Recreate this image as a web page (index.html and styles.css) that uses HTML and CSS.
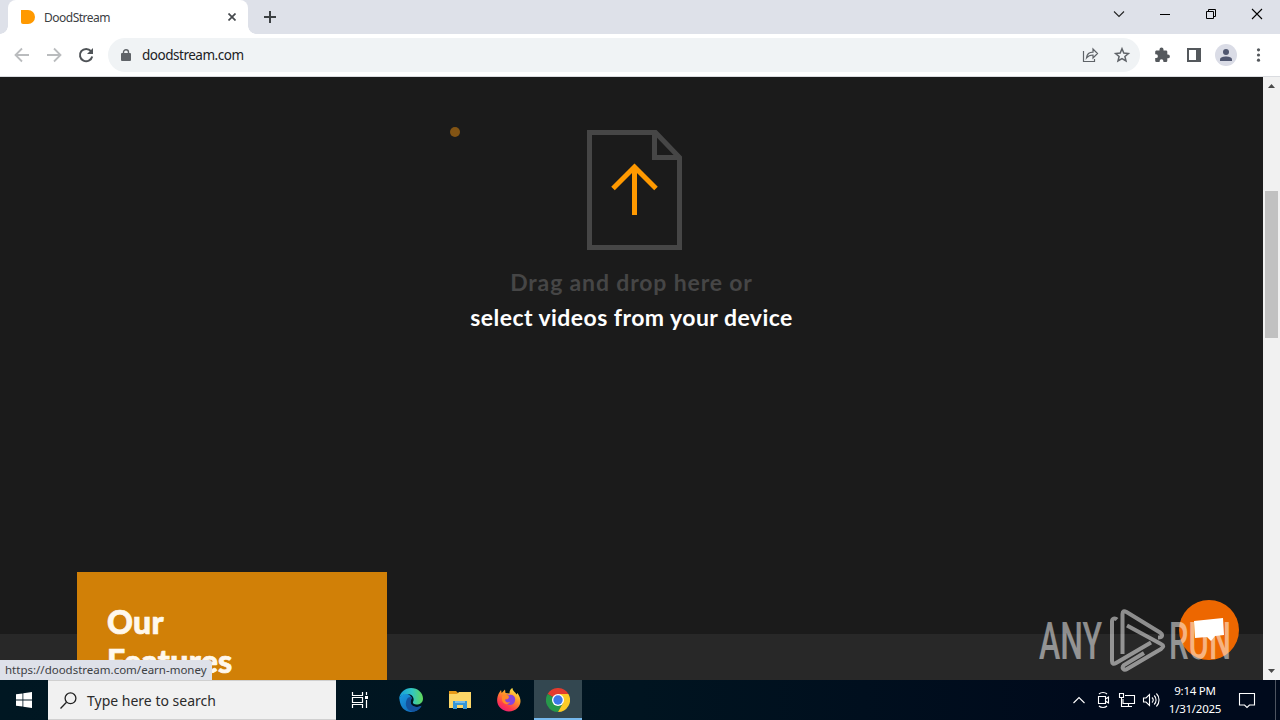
FILE: index.html
```html
<!DOCTYPE html>
<html lang="en">
<head>
    <meta charset="UTF-8">
    <meta name="viewport" content="width=device-width, initial-scale=1.0">
    <title>DoodStream</title>
    <link rel="stylesheet" href="styles.css">
</head>
<body>
    <header class="tab-strip">
        <div class="tab">
            <svg class="favicon" width="15" height="14" viewBox="0 0 15 14"><path d="M1 0h7a7 7 0 0 1 0 14H3a2 2 0 0 1-2-2z" fill="#ff9900"/></svg>
            <span class="tab-title">DoodStream</span>
            <svg width="8" height="8" viewBox="0 0 8 8" stroke="#45494d" stroke-width="1.7"><path d="M.5.5l7 7M7.5.5l-7 7"/></svg>
        </div>
        <svg class="new-tab" width="12" height="12" viewBox="0 0 12 12" stroke="#3c4043" stroke-width="2"><path d="M6 0v12M0 6h12"/></svg>
        <div class="window-buttons">
            <svg width="46" height="28" viewBox="0 0 46 28" fill="none" stroke="#222" stroke-width="1.1"><path d="M18 11.5l5 5 5-5"/></svg>
            <svg width="46" height="28" viewBox="0 0 46 28" fill="none" stroke="#000"><path d="M18 14.5h10"/></svg>
            <svg width="46" height="28" viewBox="0 0 46 28" fill="none" stroke="#000"><path d="M18.500 11.500h7v7h-7zM20.500 11.500v-2h7v7h-2"/></svg>
            <svg width="46" height="28" viewBox="0 0 46 28" fill="none" stroke="#000" stroke-width="1.1"><path d="M18 9l10 10M28 9l-10 10"/></svg>
        </div>
    </header>

    <nav class="toolbar">
        <svg width="32" height="32" viewBox="0 0 32 32" fill="none" stroke="#babcbe" stroke-width="1.8"><path d="M23 16H10M16 9.500L9.500 16l6.500 6.500"/></svg>
        <svg width="32" height="32" viewBox="0 0 32 32" fill="none" stroke="#babcbe" stroke-width="1.8"><path d="M9 16h13M16 9.500l6.500 6.500-6.500 6.500"/></svg>
        <svg width="32" height="32" viewBox="0 0 32 32" fill="none" stroke="#4f5357" stroke-width="2"><path d="M21 12.200a6.200 6.200 0 1 0 1.200 5.300"/><path d="M23 9v6h-6z" fill="#4f5357" stroke="none"/></svg>
        <div class="address">
            <svg width="10" height="12" viewBox="0 0 10 12"><rect y="4" width="10" height="8" rx="1" fill="#5f6368"/><path d="M2.500 5V3.200a2.500 2.500 0 0 1 5 0V5" fill="none" stroke="#5f6368" stroke-width="1.400"/></svg>
            <span class="url">doodstream.com</span>
            <svg width="32" height="32" viewBox="0 0 32 32" fill="none" stroke="#5f6368" stroke-width="1.200"><path d="M9.500 12v10.500h11V20M12.500 19c.5-4 3-5.800 6.500-5.800V10l4.500 4.500L19 19v-3c-3 0-4.500.5-6.500 3z"/></svg>
            <svg width="32" height="32" viewBox="0 0 32 32" fill="none" stroke="#5f6368" stroke-width="1.500"><path d="M16 9.800l1.800 4.300 4.600.4-3.500 3 1.100 4.500-4-2.400-4 2.400 1.100-4.500-3.500-3 4.600-.4z"/></svg>
        </div>
        <svg class="extensions" width="32" height="32" viewBox="0 0 32 32"><path d="M10.200 11.500h3.300v-1a2 2 0 0 1 4 0v1H20a1.300 1.300 0 0 1 1.300 1.300v2.700h.7a1.900 1.900 0 0 1 0 3.800h-.7v2.400a1.300 1.300 0 0 1-1.300 1.300h-2.600v-.8a1.900 1.900 0 0 0-3.800 0v.8h-3.100A1.300 1.300 0 0 1 9.200 21.700v-2.600h.8a1.900 1.900 0 0 0 0-3.800h-.8v-2.500a1.300 1.300 0 0 1 1-1.300z" fill="#54585c"/></svg>
        <svg width="32" height="32" viewBox="0 0 32 32"><path d="M9 9h14v14H9zM11 11v10h7V11z" fill="#54585c" fill-rule="evenodd"/></svg>
        <svg width="32" height="32" viewBox="0 0 32 32"><circle cx="16" cy="16" r="11" fill="#dadce6"/><circle cx="16" cy="13" r="3" fill="#505770"/><path d="M10 22v-1.500c0-2.200 3.500-3 6-3s6 .8 6 3V22z" fill="#505770"/></svg>
        <svg width="32" height="32" viewBox="0 0 32 32" fill="#54585c"><circle cx="16.500" cy="10.800" r="1.600"/><circle cx="16.500" cy="16" r="1.600"/><circle cx="16.500" cy="21.200" r="1.600"/></svg>
    </nav>

    <div class="viewport">
        <main class="page">
            <section class="upload">
                <span class="dot"></span>
                <svg class="file-icon" width="95" height="120" viewBox="0 0 95 120" fill="none" stroke="#464646" stroke-width="5">
                    <path d="M2.500 2.500h66l24 25v90h-90zM67.500 3v24.500H92"/>
                    <path d="M47.500 85V38M26 58.500L47.500 37 69 58.500" stroke="#ff9900"/>
                </svg>
                <p class="hint">Drag and drop here or</p>
                <p class="select">select videos from your device</p>
            </section>
            <section class="features">
                <div class="feature-card">
                    <h2>Our<br>Features</h2>
                </div>
            </section>
            <div class="chat">
                <svg width="30" height="25" viewBox="0 0 30 25"><path d="M0 3l29-3 1 17-9 1-4 5-4-4-12 1z" fill="#fff"/></svg>
            </div>
            <svg class="watermark" width="200" height="64" viewBox="0 0 200 64">
                <text x="0" y="50" textLength="63" lengthAdjust="spacingAndGlyphs">ANY</text>
                <path d="M78 10.500c-2-2-5-1-5 2V52c0 3 1.500 3.500 4 2l35-20.500M83.500 45V5c0-3 1.500-3.500 4-2L121 23.500c3 2 3 5-2 5M88 16.500l34 18.500c3 1.500 3 3 0 5L88 60c-3 2-6-1-3-4l20-12"/>
                <text x="130" y="50" textLength="62" lengthAdjust="spacingAndGlyphs">RUN</text>
            </svg>
            <div class="status">https://doodstream.com/earn-money</div>
        </main>
        <div class="scrollbar">
            <svg width="7" height="4" viewBox="0 0 7 4"><path d="M0 4l3.500-4L7 4z" fill="#4a4a4a"/></svg>
            <div class="track"><div class="thumb"></div></div>
            <svg width="7" height="4" viewBox="0 0 7 4"><path d="M0 0l3.500 4L7 0z" fill="#4a4a4a"/></svg>
        </div>
    </div>

    <footer class="taskbar">
        <div class="start">
            <svg width="16" height="16" viewBox="0 0 16 16" fill="#fff"><path d="M0 2.300L6.500 1.400v6.200H0zM7.300 1.300L16 0v7.600H7.300zM0 8.400h6.500v6.200L0 13.700zM7.300 8.400H16V16l-8.700-1.300z"/></svg>
        </div>
        <div class="search">
            <svg width="17" height="17" viewBox="0 0 17 17" fill="none" stroke="#222" stroke-width="1.300"><circle cx="10.500" cy="6.300" r="5.400"/><path d="M6.500 10.300L.5 16.500"/></svg>
            <span>Type here to search</span>
        </div>
        <div class="app task-view">
            <svg width="18" height="16" viewBox="0 0 18 16" fill="none" stroke="#fff" stroke-width="1.200"><path d="M1.500 0v3.500h10V0M1.500 16v-3.500h10V16M1.500 5.500h10v5h-10zM15.500 0v3M15.500 8v8"/><path d="M14 4h3v3h-3z" fill="#fff" stroke="none"/></svg>
        </div>
        <div class="app">
            <svg width="26" height="26" viewBox="0 0 26 26">
                <defs>
                    <linearGradient id="edgeTop" x1="0" x2="1"><stop offset="0" stop-color="#159dde"/><stop offset=".55" stop-color="#32c6c2"/><stop offset="1" stop-color="#62d957"/></linearGradient>
                    <linearGradient id="edgeBase" x1="0" x2="1" y1="0" y2="1"><stop offset="0" stop-color="#199be2"/><stop offset="1" stop-color="#0f5eae"/></linearGradient>
                </defs>
                <path d="M1.300 11C2 18 4 23 11 24.800c6 1 10-2 12.500-6-4 2.500-10 1.500-11-3-.5-2.500 1.500-4 1-5C11 5 4 6 1.300 11z" fill="url(#edgeBase)"/>
                <path d="M1 12C2 5 7 1 13 1c7 0 12 5 12 10.500 0 4-3 6-6.500 6-2.500 0-4-1-3.500-2.500 2-3.500-.5-8-5.500-8C5 7 2 9 1 12z" fill="url(#edgeTop)"/>
                <path d="M9 12c-3 6 0 12 6 12.500 4 0 7-2.500 8.500-5.700-5 2.500-11 .5-11-4.300 0-2 1.500-3 1.500-4-2-1-4 0-5 1.500z" fill="#14539e"/>
            </svg>
        </div>
        <div class="app">
            <svg width="22" height="18" viewBox="0 0 22 18"><path d="M0 0h7l2 2v5H0z" fill="#e79a18"/><path d="M0 3h8l2-2h12v16H0z" fill="#fcd667"/><path d="M4 18v-8h14v8h-4v-4H8v4z" fill="#3596d6"/><path d="M6 10h10v2H6z" fill="#76bce9"/></svg>
        </div>
        <div class="app">
            <svg width="24" height="24" viewBox="0 0 24 24">
                <defs>
                    <linearGradient id="fire" x1=".8" y1="0" x2=".2" y2="1"><stop offset="0" stop-color="#fff04a"/><stop offset=".4" stop-color="#ff9529"/><stop offset=".75" stop-color="#ff394d"/><stop offset="1" stop-color="#e9177e"/></linearGradient>
                </defs>
                <path d="M2 5l2-3 .7 3L8 1.500 8.500 5l4 .5c0-3 1-4.500 3-5.500 0 3 3 4 4 6.500l1-1.500c4 6 4 11 0 15s-12 5-17 0S0 9 2 5z" fill="url(#fire)"/>
                <path d="M7 9c1-2 3-3 5-2 4-1 7 2 6 6s-5 5-8 3-3-4-3-4l4-1 1-2z" fill="#8744dc"/>
                <path d="M5 8c3-2 5-1 7 0l-1 2-3 1c0 3 2 4 5 3-2 4-8 2-8-3z" fill="#ff8a27"/>
            </svg>
        </div>
        <div class="app active">
            <svg width="24" height="24" viewBox="0 0 24 24"><path d="M12 12L1.600 6A12 12 0 0 1 22.400 6z" fill="#e33b2e"/><path d="M12 12L1.600 6A12 12 0 0 0 12 24l5-9z" fill="#27984a"/><path d="M12 6h10.400A12 12 0 0 1 12 24l5-9z" fill="#fccb26"/><circle cx="12" cy="12" r="6" fill="#fff"/><circle cx="12" cy="12" r="4.700" fill="#3b78e7"/></svg>
        </div>
        <div class="tray">
            <svg width="24" height="24" viewBox="0 0 24 24"><path d="M6.500 15l5.500-5.500 5.500 5.500"/></svg>
            <svg width="24" height="24" viewBox="0 0 24 24"><path d="M7.500 8.500h7v7h-7zM14.500 11l3-2v6l-3-2M8 6c2-2 6-2 8 0M8 18c2 2 6 2 8 0"/></svg>
            <svg width="24" height="24" viewBox="0 0 24 24"><path d="M10 7.500h9.500v8H8V11M13.500 15.500v3M9 18.500h8M4.500 5.500h4v4h-4zM6.500 9.500v9H9"/></svg>
            <svg width="24" height="24" viewBox="0 0 24 24"><path d="M4.500 10h2.500l3.500-3.500v11L7 14H4.500zM13 9.500c1.500 1.500 1.500 3.500 0 5M15.200 7.500c2.500 2.500 2.500 6.500 0 9M17.400 5.500c3.500 3.500 3.500 9.500 0 13"/></svg>
            <div class="clock">
                <span class="time">9:14 PM</span>
                <span class="date">1/31/2025</span>
            </div>
            <svg class="notifications" width="18" height="17" viewBox="0 0 18 17"><path d="M1.500 1.500h15v11.500h-5L9 15.500 6.500 13h-5z"/></svg>
        </div>
    </footer>
</body>
</html>
```

FILE: styles.css
```css
* {
    box-sizing: border-box;
}
body {
    margin: 0;
    width: 1280px;
    height: 720px;
    overflow: hidden;
    display: flex;
    flex-direction: column;
    font-family: "Noto Sans", "Open Sans", sans-serif;
}
svg {
    display: block;
    flex: none;
}
p, h2 {
    margin: 0;
}

/* Browser */
.tab-strip {
    display: flex;
    height: 34px;
    flex: none;
    background-color: #dee1e9;
    padding-left: 8px;
}
.tab {
    position: relative;
    display: flex;
    align-items: center;
    width: 240px;
    padding: 0 12px;
    background-color: #fff;
    border-radius: 8px 8px 0 0;
    font-size: 12px;
    color: #3c4043;
}
.tab::before,
.tab::after {
    content: "";
    position: absolute;
    bottom: 0;
    width: 8px;
    height: 8px;
}
.tab::before {
    left: -8px;
    background: radial-gradient(circle at 0 0, transparent 7.5px, #fff 8px);
}
.tab::after {
    right: -8px;
    background: radial-gradient(circle at 100% 0, transparent 7.5px, #fff 8px);
}
.tab-title {
    flex: 1;
    margin-left: 9px;
    letter-spacing: -0.5px;
}
.new-tab {
    margin: 11px 0 0 16px;
}
.window-buttons {
    display: flex;
    margin-left: auto;
}
.toolbar {
    display: flex;
    align-items: center;
    height: 43px;
    flex: none;
    padding: 0 5px 0 6px;
    background-color: #fff;
    border-bottom: 1px solid #dadce0;
}
.address {
    display: flex;
    align-items: center;
    width: 1032px;
    height: 34px;
    margin-left: 6px;
    padding: 0 2px 0 13px;
    border-radius: 17px;
    background-color: #f0f3f5;
}
.url {
    flex: 1;
    margin-left: 11px;
    font-size: 13.5px;
    letter-spacing: -0.48px;
    color: #202124;
}
.extensions {
    margin-left: 6px;
}

/* Page */
.viewport {
    display: flex;
    height: 603px;
    flex: none;
}
.page {
    position: relative;
    width: 1263px;
    overflow: hidden;
    background-color: #1b1b1b;
}
.upload {
    display: flex;
    flex-direction: column;
    align-items: center;
    height: 557px;
    padding-top: 53px;
    font-family: Lato, sans-serif;
    font-size: 23px;
    font-weight: bold;
    line-height: 35px;
}
.dot {
    position: absolute;
    left: 450px;
    top: 50px;
    width: 10px;
    height: 10px;
    border-radius: 50%;
    background-color: #825414;
}
.file-icon {
    margin-left: 6px;
}
.hint {
    margin-top: 15px;
    color: #464646;
    letter-spacing: 0.85px;
}
.select {
    color: #fff;
    letter-spacing: 0.45px;
}
.features {
    height: 46px;
    padding-left: 77px;
    background-color: #282828;
}
.feature-card {
    width: 310px;
    height: 200px;
    padding: 30px;
    background-color: #d18007;
    transform: translateY(-62px);
}
.feature-card h2 {
    font-family: Lato, sans-serif;
    font-size: 32px;
    font-weight: 900;
    line-height: 39px;
    letter-spacing: 0.3px;
    color: #fff8ed;
    -webkit-text-stroke: 0.7px #fff8ed;
}
.chat {
    position: absolute;
    left: 1179px;
    top: 523px;
    width: 60px;
    height: 60px;
    border-radius: 50%;
    display: flex;
    align-items: center;
    justify-content: center;
    background-color: #ed6700;
}
.watermark {
    position: absolute;
    left: 1039px;
    top: 532px;
    opacity: 0.5;
}
.watermark text {
    font-family: Roboto, sans-serif;
    font-size: 52px;
    font-weight: 500;
    fill: #fff;
}
.watermark path {
    fill: none;
    stroke: #fff;
    stroke-width: 4;
}
.status {
    position: absolute;
    left: 0;
    bottom: 0;
    width: 212px;
    height: 20px;
    padding-left: 5px;
    border-top-right-radius: 3px;
    background-color: #dee1e9;
    color: #3c4043;
    font-size: 11.5px;
    line-height: 20px;
    white-space: nowrap;
}
.scrollbar {
    display: flex;
    flex-direction: column;
    align-items: center;
    width: 17px;
    padding: 7px 0;
    background-color: #f1f1f1;
}
.track {
    flex: 1;
    padding-top: 103px;
}
.thumb {
    width: 13px;
    height: 147px;
    background-color: #c1c1c1;
}

/* Taskbar */
.taskbar {
    display: flex;
    height: 40px;
    flex: none;
    background: linear-gradient(to right, #001722, #001420 50%, #000a1c 85%, #000a1c);
}
.start {
    display: flex;
    align-items: center;
    justify-content: center;
    width: 48px;
}
.search {
    display: flex;
    align-items: center;
    width: 288px;
    padding-left: 12px;
    gap: 10px;
    background-color: #f1f1f1;
    border: 1px solid #d0d0d0;
    border-width: 1px 0;
    font-size: 14px;
    color: #2b2b2b;
}
.app {
    display: flex;
    align-items: center;
    justify-content: center;
    width: 48px;
    margin-right: 1px;
}
.task-view {
    margin-right: 3px;
}
.active {
    background-color: #334750;
    border-bottom: 2px solid #76b9ed;
    padding-top: 2px;
}
.tray {
    display: flex;
    align-items: center;
    margin-left: auto;
    margin-right: 4px;
    padding-right: 19px;
    border-right: 1px solid #4d5460;
}
.tray path {
    fill: none;
    stroke: #fff;
    stroke-width: 1.1;
}
.clock {
    display: flex;
    flex-direction: column;
    align-items: center;
    width: 64px;
    font-size: 11.5px;
    line-height: 18px;
    letter-spacing: -0.25px;
    color: #fff;
}
.notifications {
    margin-left: 11px;
}
```
